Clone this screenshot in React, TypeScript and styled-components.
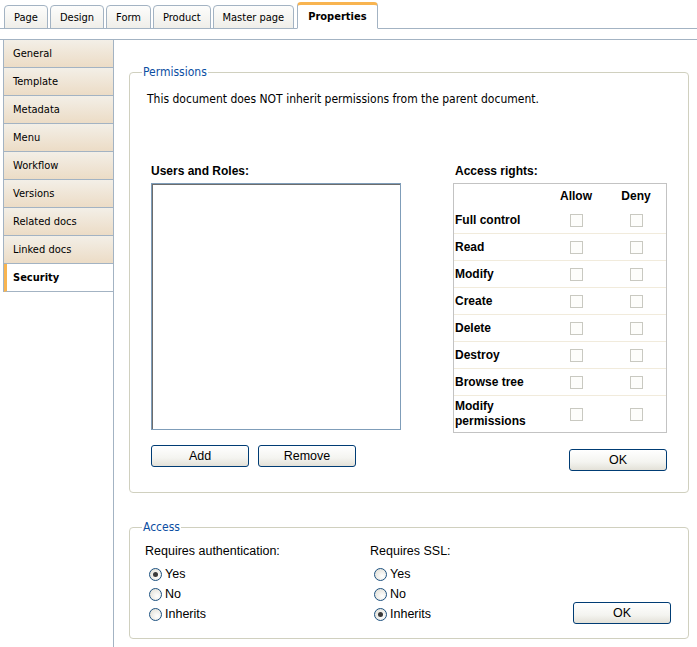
import styled, { createGlobalStyle } from "styled-components";

const TAHOMA = `"DejaVu Sans Condensed", "DejaVu Sans", sans-serif`;
const ARIAL = `"Liberation Sans", Arial, sans-serif`;

const GlobalStyle = createGlobalStyle`
  html, body {
    margin: 0;
    padding: 0;
    background: #ffffff;
  }
  body {
    font-family: ${ARIAL};
    color: #000000;
  }
`;

const tabs = ["Page", "Design", "Form", "Product", "Master page", "Properties"];
const menu = [
  "General",
  "Template",
  "Metadata",
  "Menu",
  "Workflow",
  "Versions",
  "Related docs",
  "Linked docs",
  "Security",
];
const rights = [
  "Full control",
  "Read",
  "Modify",
  "Create",
  "Delete",
  "Destroy",
  "Browse tree",
  "Modify permissions",
];

const StylePage = styled.div`
  display: flex;
  flex-direction: column;
  min-height: 100vh;
`;

const StyleTabStrip = styled.div`
  display: flex;
  align-items: flex-end;
  gap: 2px;
  height: 28px;
  padding-left: 4px;
  border-bottom: 1px solid #a3b3c3;
`;

const StyleTab = styled.div<{ $active?: boolean }>`
  display: flex;
  align-items: center;
  height: ${(p) => (p.$active ? "23px" : "22px")};
  margin-bottom: -1px;
  padding: 0 ${(p) => (p.$active ? "10px" : "9px")};
  margin-left: ${(p) => (p.$active ? "1px" : "0")};
  border: 1px solid #a3b3c3;
  border-top: ${(p) => (p.$active ? "3px solid #f8b450" : "1px solid #a3b3c3")};
  border-bottom: 1px solid ${(p) => (p.$active ? "#ffffff" : "#a3b3c3")};
  border-radius: 4px 4px 0 0;
  background: ${(p) =>
    p.$active ? "#ffffff" : "linear-gradient(#fdfdfc, #efeee9)"};
  font-family: ${TAHOMA};
  font-size: 11px;
  font-weight: ${(p) => (p.$active ? "bold" : "normal")};
  color: #000;
`;

const StyleBody = styled.div`
  display: flex;
  flex: 1;
  margin-top: 10px;
  border-top: 1px solid #a3b3c3;
`;

const StyleSidebar = styled.div`
  width: 113px;
  flex-shrink: 0;
  border-right: 1px solid #a3b3c3;
`;

const StyleMenu = styled.div`
  margin-left: 3px;
  border-left: 1px solid #a3b3c3;
`;

const StyleMenuItem = styled.div<{ $active?: boolean }>`
  display: flex;
  align-items: center;
  height: 27px;
  padding-left: ${(p) => (p.$active ? "6px" : "9px")};
  border-bottom: 1px solid #a3b3c3;
  border-left: ${(p) => (p.$active ? "3px solid #f8b450" : "none")};
  background: ${(p) =>
    p.$active ? "#ffffff" : "linear-gradient(#f3efe7, #ecdcc6)"};
  font-family: ${TAHOMA};
  font-size: 11px;
  font-weight: ${(p) => (p.$active ? "bold" : "normal")};
`;

const StyleContent = styled.div`
  flex: 1;
  padding: 25px 8px 0 15px;
`;

const StyleFieldset = styled.fieldset<{ $gap?: number }>`
  margin: ${(p) => p.$gap ?? 0}px 0 0 0;
  padding: 0;
  border: 1px solid #d0d0bf;
  border-radius: 4px;
  min-width: 0;
`;

const StyleLegend = styled.legend`
  margin-left: 12px;
  padding: 0 1px;
  font-family: ${TAHOMA};
  font-size: 12px;
  line-height: 14px;
  color: #0b4ea2;
`;

const StylePermBody = styled.div`
  padding: 13px 21px 21px 17px;
`;

const StyleNote = styled.div`
  font-family: ${TAHOMA};
  font-size: 12px;
  line-height: 14px;
`;

const StyleColumns = styled.div`
  display: flex;
  justify-content: space-between;
  margin: 58px 0 0 4px;
`;

const StyleColumn = styled.div<{ $width: number }>`
  display: flex;
  flex-direction: column;
  width: ${(p) => p.$width}px;
`;

const StyleLabel = styled.div<{ $indent?: number }>`
  font-family: ${ARIAL};
  font-size: 12px;
  font-weight: bold;
  line-height: 14px;
  margin: 0 0 5px ${(p) => p.$indent ?? 0}px;
`;

const StyleListBox = styled.div`
  width: 250px;
  height: 247px;
  box-sizing: border-box;
  border: 1px solid #7f9db9;
  box-shadow: inset 1px 1px 0 #6d6d6d;
  background: #fff;
`;

const StyleButtonRow = styled.div`
  display: flex;
  gap: 9px;
  margin-top: 15px;
`;

const StyleButton = styled.button<{ $align?: string; $top?: number }>`
  width: 98px;
  height: 22px;
  padding: 0;
  align-self: ${(p) => p.$align ?? "auto"};
  margin-top: ${(p) => p.$top ?? 0}px;
  border: 1px solid #003c74;
  border-radius: 3px;
  background: linear-gradient(#ffffff, #f4f4f0 60%, #e3e1d8);
  font-family: ${ARIAL};
  font-size: 12.5px;
  color: #000;
`;

const StyleRights = styled.div`
  border: 1px solid #c3c3c3;
`;

const StyleRightsRow = styled.div<{ $height: number; $line?: boolean }>`
  display: grid;
  grid-template-columns: 92px 60px 60px;
  align-items: center;
  height: ${(p) => p.$height}px;
  box-sizing: border-box;
  border-bottom: ${(p) => (p.$line ? "1px solid #f1ebdc" : "none")};
`;

const StyleRightName = styled.div`
  padding-left: 1px;
  font-family: ${ARIAL};
  font-size: 12px;
  font-weight: bold;
  line-height: 15px;
`;

const StyleHeadCell = styled.div`
  text-align: center;
  font-family: ${ARIAL};
  font-size: 12px;
  font-weight: bold;
`;

const StyleCheckCell = styled.div`
  display: flex;
  justify-content: center;
`;

const StyleCheckbox = styled.span`
  width: 11px;
  height: 11px;
  border: 1px solid #c9c9c1;
  background: #fdfdfb;
`;

const StyleAccessBody = styled.div`
  display: flex;
  padding: 10px 17px 14px 15px;
`;

const StyleRadioGroup = styled.div<{ $width?: number }>`
  display: flex;
  flex-direction: column;
  width: ${(p) => (p.$width ? `${p.$width}px` : "auto")};
  flex: ${(p) => (p.$width ? "none" : "1")};
`;

const StyleGroupTitle = styled.div`
  font-family: ${ARIAL};
  font-size: 12.5px;
  line-height: 15px;
  margin-bottom: 5px;
`;

const StyleRadioRow = styled.label`
  display: flex;
  align-items: center;
  gap: 3px;
  height: 20px;
  padding-left: 4px;
  font-family: ${ARIAL};
  font-size: 12.5px;
`;

const StyleRadio = styled.span<{ $checked?: boolean }>`
  position: relative;
  width: 11px;
  height: 11px;
  border: 1px solid #1c5180;
  border-radius: 50%;
  background: radial-gradient(circle at 65% 65%, #ffffff, #e4e2da 80%);

  &::after {
    content: "";
    display: ${(p) => (p.$checked ? "block" : "none")};
    position: absolute;
    left: 3px;
    top: 3px;
    width: 5px;
    height: 5px;
    border-radius: 50%;
    background: #3a3a3a;
  }
`;

const RadioGroup = ({
  title,
  checked,
  width,
}: {
  title: string;
  checked: string;
  width?: number;
}) => (
  <StyleRadioGroup $width={width}>
    <StyleGroupTitle>{title}</StyleGroupTitle>
    {["Yes", "No", "Inherits"].map((o) => (
      <StyleRadioRow key={o}>
        <StyleRadio $checked={o === checked} />
        {o}
      </StyleRadioRow>
    ))}
  </StyleRadioGroup>
);

const App = () => {
  return (
    <>
      <GlobalStyle />
      <StylePage>
        <StyleTabStrip>
          {tabs.map((t) => (
            <StyleTab key={t} $active={t === "Properties"}>
              {t}
            </StyleTab>
          ))}
        </StyleTabStrip>
        <StyleBody>
          <StyleSidebar>
            <StyleMenu>
              {menu.map((m) => (
                <StyleMenuItem key={m} $active={m === "Security"}>
                  {m}
                </StyleMenuItem>
              ))}
            </StyleMenu>
          </StyleSidebar>
          <StyleContent>
            <StyleFieldset>
              <StyleLegend>Permissions</StyleLegend>
              <StylePermBody>
                <StyleNote>
                  This document does NOT inherit permissions from the parent
                  document.
                </StyleNote>
                <StyleColumns>
                  <StyleColumn $width={250}>
                    <StyleLabel>Users and Roles:</StyleLabel>
                    <StyleListBox />
                    <StyleButtonRow>
                      <StyleButton>Add</StyleButton>
                      <StyleButton>Remove</StyleButton>
                    </StyleButtonRow>
                  </StyleColumn>
                  <StyleColumn $width={214}>
                    <StyleLabel $indent={2}>Access rights:</StyleLabel>
                    <StyleRights>
                      <StyleRightsRow $height={23}>
                        <div />
                        <StyleHeadCell>Allow</StyleHeadCell>
                        <StyleHeadCell>Deny</StyleHeadCell>
                      </StyleRightsRow>
                      {rights.map((r, i) => {
                        const last = i === rights.length - 1;
                        return (
                          <StyleRightsRow
                            key={r}
                            $height={last ? 36 : 27}
                            $line={!last}
                          >
                            <StyleRightName>
                              {r === "Modify permissions" ? (
                                <>
                                  Modify
                                  <br />
                                  permissions
                                </>
                              ) : (
                                r
                              )}
                            </StyleRightName>
                            <StyleCheckCell>
                              <StyleCheckbox />
                            </StyleCheckCell>
                            <StyleCheckCell>
                              <StyleCheckbox />
                            </StyleCheckCell>
                          </StyleRightsRow>
                        );
                      })}
                    </StyleRights>
                    <StyleButton $align="flex-end" $top={16}>
                      OK
                    </StyleButton>
                  </StyleColumn>
                </StyleColumns>
              </StylePermBody>
            </StyleFieldset>
            <StyleFieldset $gap={27}>
              <StyleLegend>Access</StyleLegend>
              <StyleAccessBody>
                <RadioGroup
                  title="Requires authentication:"
                  checked="Yes"
                  width={225}
                />
                <RadioGroup title="Requires SSL:" checked="Inherits" />
                <StyleButton $align="flex-end">OK</StyleButton>
              </StyleAccessBody>
            </StyleFieldset>
          </StyleContent>
        </StyleBody>
      </StylePage>
    </>
  );
};

export default App;
